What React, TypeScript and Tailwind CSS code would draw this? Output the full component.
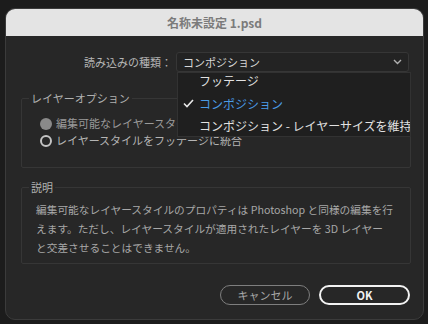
import React from "react";

const font = { fontFamily: '"Noto Sans CJK JP", "Noto Sans", sans-serif' };

export default function App() {
  return (
    <div
      className="w-[428px] h-[324px] bg-[#1c1c1c] overflow-hidden pt-[8px] pl-[5px]"
      style={font}
    >
      <div className="w-[419px] h-[312px] rounded-[10px] border border-[#3b3b3b] bg-[#272727] overflow-hidden flex flex-col">
        <div className="h-[27px] shrink-0 bg-[#e4e4e4] flex items-center justify-center text-[12px] font-bold text-[#7b7b7b]">
          名称未設定 1.psd
        </div>

        <div className="flex items-center mt-[16px] h-[20px]">
          <div className="w-[166px] text-right text-[11px] text-[#b5b5b5] leading-[20px]">
            読み込みの種類：
          </div>
          <div className="relative ml-[4px] w-[233px] h-[20px]">
            <div className="w-full h-full rounded-[3px] border border-[#363636] bg-[#232323] flex items-center pl-[6px] pr-[6px] text-[11px] text-[#d8d8d8]">
              <span className="flex-1">コンポジション</span>
              <svg width="9" height="6" viewBox="0 0 9 6">
                <polyline points="1,1 4.5,4.5 8,1" fill="none" stroke="#b0b0b0" strokeWidth="1.4" />
              </svg>
            </div>
            <div className="absolute z-10 left-[1px] top-[20px] w-[234px] h-[65px] bg-[#1f1f1f] border border-[#323232] flex flex-col text-[12px] whitespace-nowrap overflow-hidden">
              <div className="-mt-[3px] h-[22.5px] shrink-0 flex items-center pl-[21px] text-[#e2e2e2]">フッテージ</div>
              <div className="h-[22.5px] shrink-0 flex items-center text-[#4a9be6]">
                <span className="w-[21px] flex justify-center">
                  <svg width="11" height="9" viewBox="0 0 11 9">
                    <polyline points="1,4.5 4,7.5 10,1" fill="none" stroke="#e8e8e8" strokeWidth="1.6" />
                  </svg>
                </span>
                コンポジション
              </div>
              <div className="h-[22.5px] shrink-0 flex items-center pl-[21px] text-[#e2e2e2]">
                コンポジション - レイヤーサイズを維持
              </div>
            </div>
          </div>
        </div>

        <fieldset className="mt-[19px] ml-[15px] w-[390px] h-[77px] border border-[#363636] rounded-[2px] px-[18px]">
          <legend className="px-[2px] -ml-[11px] text-[11px] leading-[14px] text-[#b0b0b0]">
            レイヤーオプション
          </legend>
          <div className="mt-[10px] flex flex-col text-[11px]">
            <div className="flex items-center h-[17px]">
              <span className="w-[12px] h-[12px] rounded-full bg-[#8a8a8a]" />
              <span className="ml-[4px] text-[#9a9a9a]">編集可能なレイヤースタイル</span>
            </div>
            <div className="flex items-center h-[17px]">
              <span className="w-[12px] h-[12px] rounded-full border-2 border-[#c4c4c4]" />
              <span className="ml-[4px] text-[#b5b5b5]">レイヤースタイルをフッテージに統合</span>
            </div>
          </div>
        </fieldset>

        <fieldset className="mt-[12px] ml-[15px] w-[390px] h-[84px] border border-[#363636] rounded-[2px] px-[14px]">
          <legend className="px-[2px] -ml-[7px] text-[11px] leading-[14px] text-[#b0b0b0]">説明</legend>
          <div className="mt-[6px] text-[10.7px] leading-[19px] text-[#a8a8a8] whitespace-nowrap">
            <div>編集可能なレイヤースタイルのプロパティは Photoshop と同様の編集を行</div>
            <div>えます。ただし、レイヤースタイルが適用されたレイヤーを 3D レイヤー</div>
            <div>と交差させることはできません。</div>
          </div>
        </fieldset>

        <div className="mt-[21px] flex justify-end gap-[9px] pr-[13px]">
          <div className="w-[90px] h-[20px] rounded-full border-[1.5px] border-[#7e7e7e] flex items-center justify-center text-[11px] text-[#a8a8a8]">
            キャンセル
          </div>
          <div className="w-[91px] h-[20px] rounded-full border-2 border-[#f2f2f2] flex items-center justify-center text-[11px] font-bold text-[#f2f2f2]">
            OK
          </div>
        </div>
      </div>
    </div>
  );
}
